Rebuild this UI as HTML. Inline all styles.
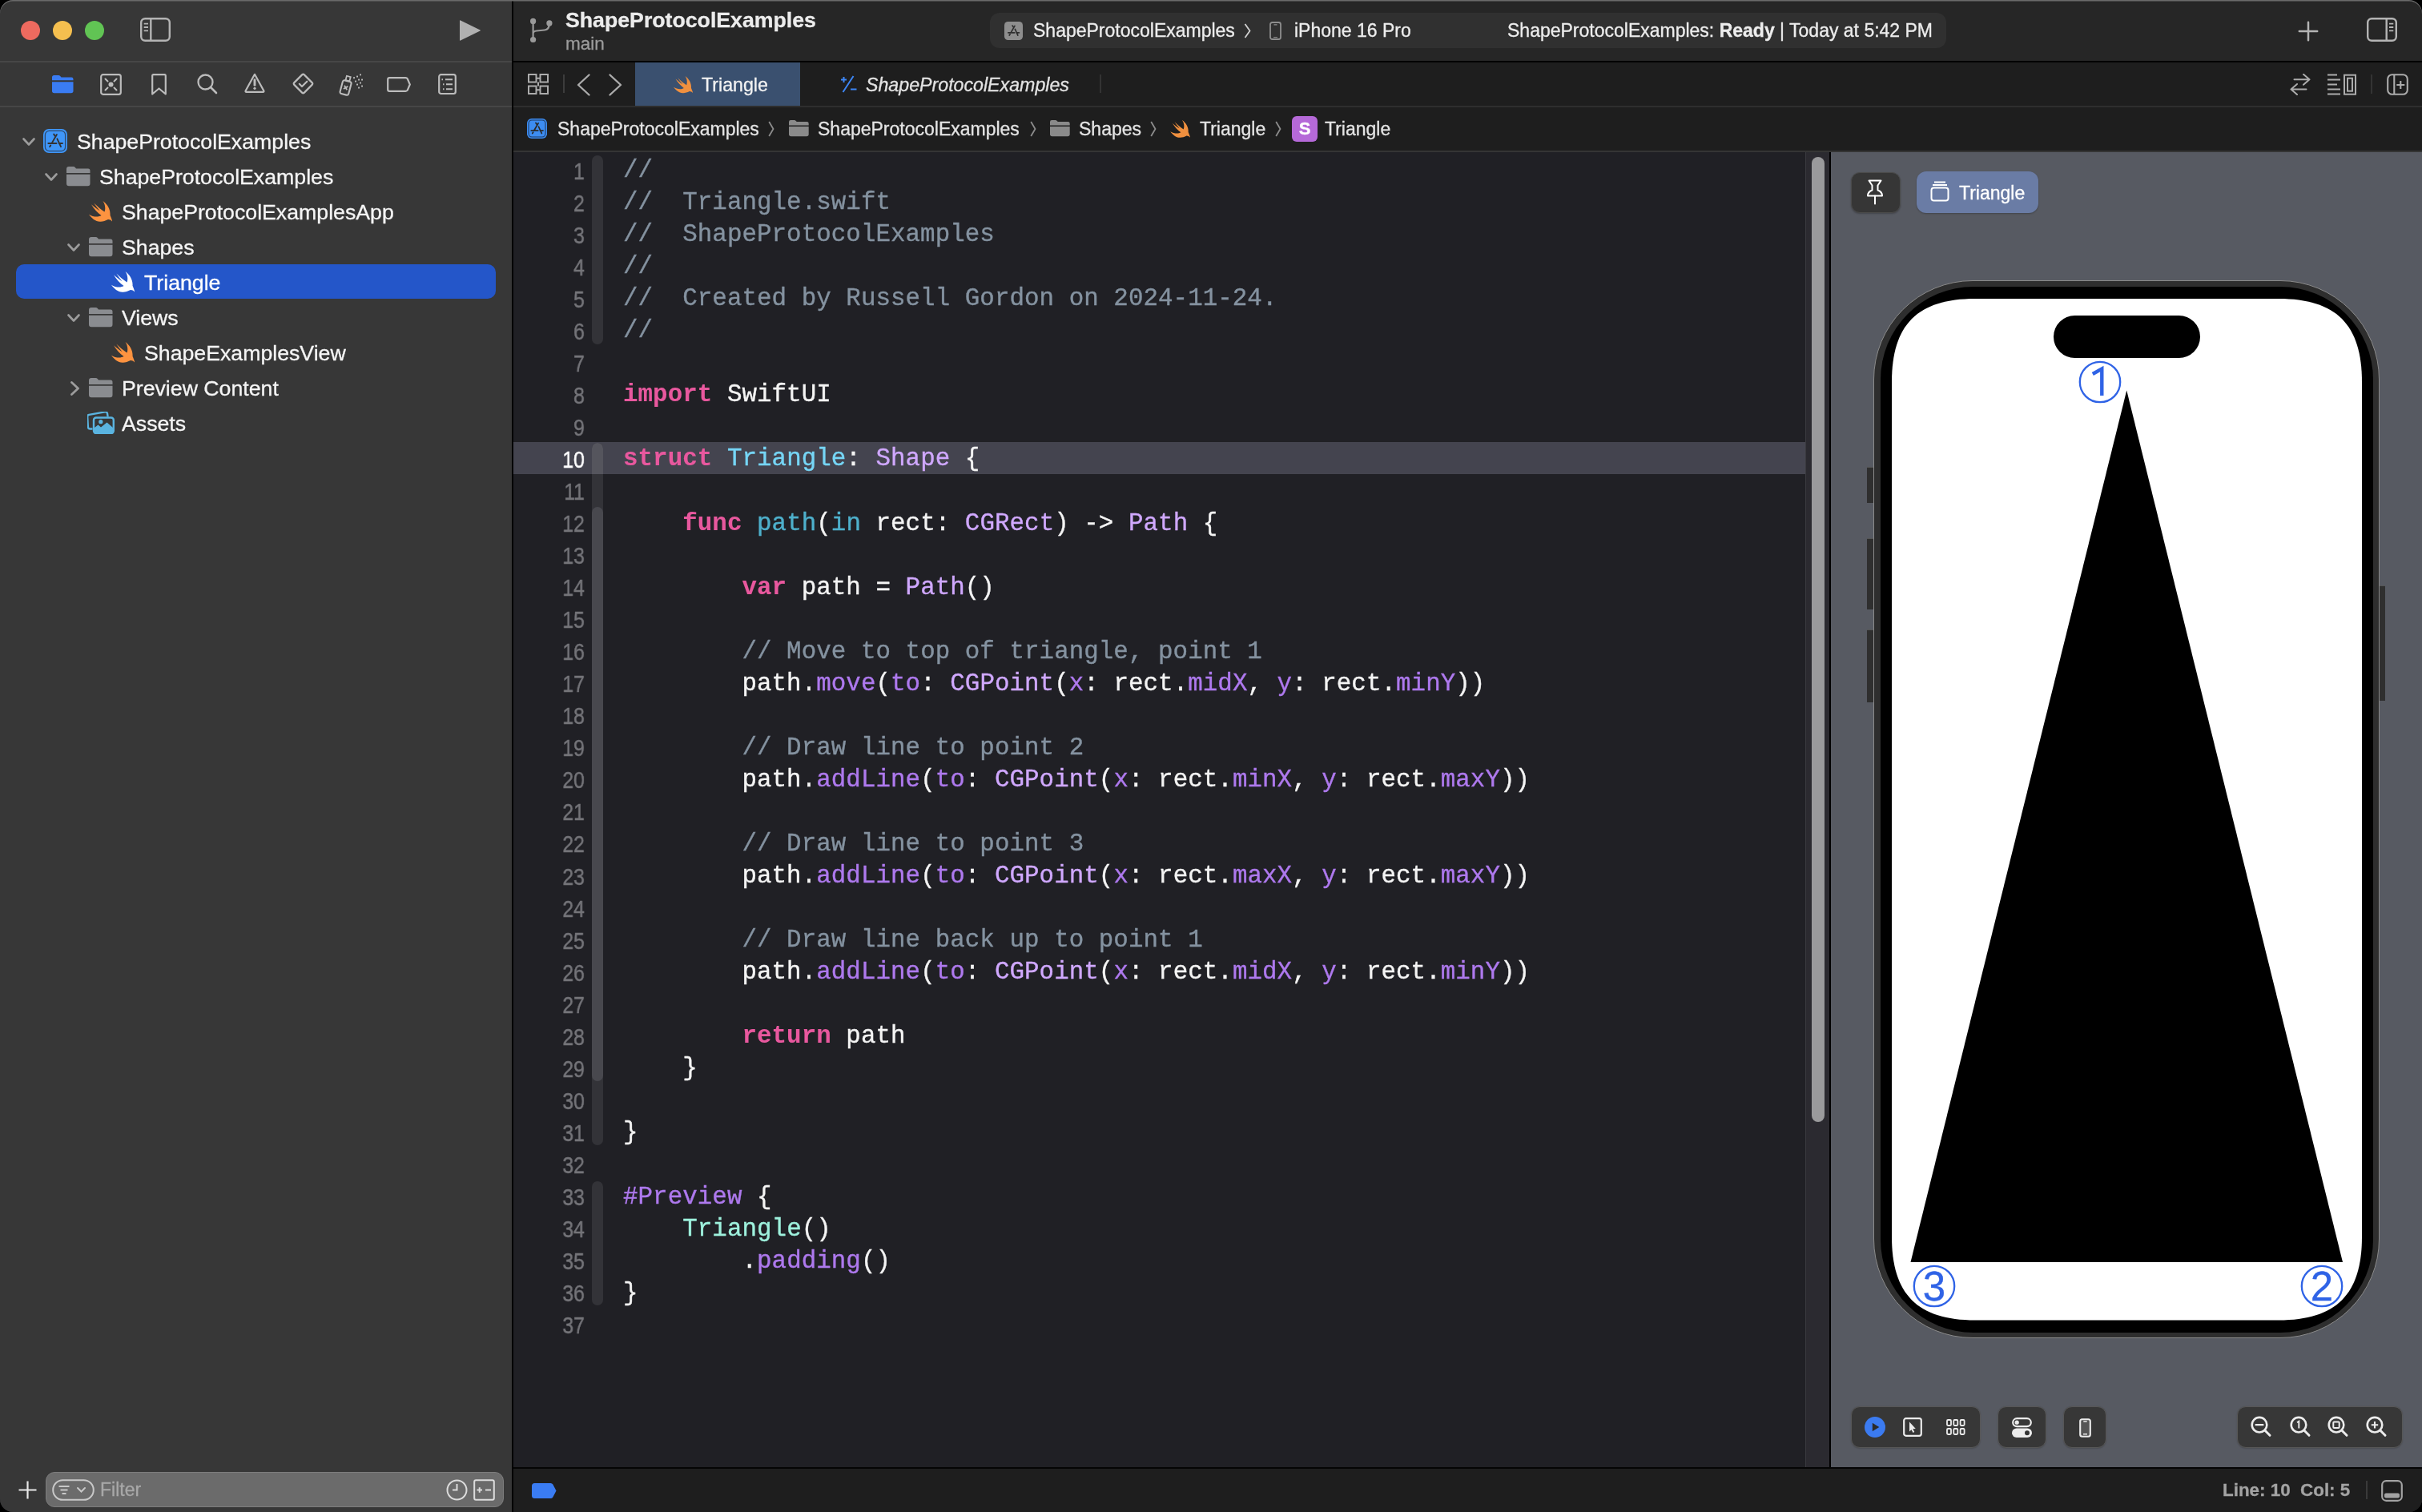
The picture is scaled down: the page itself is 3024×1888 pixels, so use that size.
<!DOCTYPE html>
<html><head><meta charset="utf-8">
<style>
*{margin:0;padding:0;box-sizing:border-box}
html,body{width:3024px;height:1888px;overflow:hidden;background:#000}
body{font-family:"Liberation Sans",sans-serif;color:#e6e6e6;position:relative}
.t,.code,.nums{will-change:transform}
.abs{position:absolute}
#win{position:absolute;left:0;top:0;width:3024px;height:1888px;border-radius:16px;overflow:hidden;background:#1f1f24}
/* sidebar */
#side{position:absolute;left:0;top:0;width:639px;height:1888px;background:#373737}
#vsep{position:absolute;left:639px;top:0;width:2px;height:1888px;background:#000}
.hl{position:absolute;height:2px;background:#464646}
.tl{position:absolute;width:24px;height:24px;border-radius:50%;top:26px}
/* toolbar */
#tb{position:absolute;left:641px;top:0;width:2383px;height:76px;background:#262626}
#tbline{position:absolute;left:641px;top:76px;width:2383px;height:2px;background:#030303}
#tabs{position:absolute;left:641px;top:78px;width:2383px;height:55px;background:#1e1e1e}
#crumb{position:absolute;left:641px;top:132px;width:2383px;height:58px;background:#1e1e1e;border-top:2px solid #2e2e2e;border-bottom:2px solid #353535}
#editor{position:absolute;left:641px;top:190px;width:1643px;height:1642px;background:#202025}
#canvas{position:absolute;left:2286px;top:190px;width:738px;height:1642px;background:#575a62}
#csep{position:absolute;left:2283.5px;top:190px;width:2.5px;height:1642px;background:#000}
#status{position:absolute;left:641px;top:1832px;width:2383px;height:56px;background:#1e1e1e;border-top:2px solid #050505}
.t{position:absolute;white-space:pre;line-height:1;-webkit-text-stroke:0.3px currentColor}
.tree{font-size:26.7px;color:#f2f2f2}
.code{position:absolute;left:777.5px;top:193.2px;font-family:"Liberation Mono",monospace;font-size:30.8px;line-height:40.05px;white-space:pre;color:#f4f4f4;letter-spacing:0.075px;-webkit-text-stroke:0.35px currentColor}
.code i{font-style:normal}
.code .c{color:#8492a0}
.code .k{color:#e8589e;font-weight:bold;-webkit-text-stroke:0.1px currentColor}
.code .d{color:#76d6f6}
.code .o{color:#4eb0cc}
.code .t{color:#d0a8ff;position:static;white-space:pre;line-height:inherit}
.code .f{color:#ae79ee}
.code .m{color:#ae79ee}
.code .j{color:#9ef1dd}
.nums{position:absolute;left:641px;top:192px;width:89px;text-align:right;font-size:29px;line-height:40.05px;color:#747479;transform:scaleX(0.86);transform-origin:89px 0;-webkit-text-stroke:0.45px #747479;padding-top:1.5px}
.nums b{display:block;font-weight:normal}
.nums b.cur{color:#ffffff;-webkit-text-stroke:0.45px #fff}
.ic{position:absolute}
</style></head><body>
<div id="win">
<!-- SIDEBAR -->
<div id="side">
  <div class="tl" style="left:26px;background:#ee6a5f"></div>
  <div class="tl" style="left:66px;background:#f5bf4f"></div>
  <div class="tl" style="left:106px;background:#61c454"></div>
  <!-- sidebar toggle -->
  <svg class="ic" style="left:175px;top:22px" width="38" height="30" viewBox="0 0 38 30"><rect x="1.2" y="1.2" width="35.6" height="27.6" rx="5" fill="none" stroke="#b4b4b4" stroke-width="2.4"/><line x1="13.3" y1="1.5" x2="13.3" y2="28.5" stroke="#b4b4b4" stroke-width="2.4"/><line x1="4.7" y1="7.7" x2="10" y2="7.7" stroke="#b4b4b4" stroke-width="1.8"/><line x1="4.7" y1="12" x2="10" y2="12" stroke="#b4b4b4" stroke-width="1.8"/><line x1="4.7" y1="16.3" x2="10" y2="16.3" stroke="#b4b4b4" stroke-width="1.8"/></svg>
  <!-- play -->
  <svg class="ic" style="left:572px;top:23px" width="30" height="30" viewBox="0 0 30 30"><path d="M3 2.5 Q2 1.8 2 3 L2 27 Q2 28.2 3 27.5 L27.5 15.6 Q28.5 15 27.5 14.4 Z" fill="#b0b0b0"/></svg>
  <div class="hl" style="left:0;top:76px;width:639px"></div>
  <div class="hl" style="left:0;top:132px;width:639px"></div>
  <!-- NAV ICONS -->
  <svg class="ic" style="left:64.7px;top:93.8px" width="27" height="23" viewBox="0 0 27 23"><path d="M0,2.6 Q0,0 2.6,0 L8,0 Q9.3,0 10.2,1 L11.5,2.4 L24.2,2.4 Q26.5,2.4 26.5,4.8 L26.5,6.3 L0,6.3 Z" fill="#3a7cf3"/><path d="M0,8.2 L26.5,8.2 L26.5,19.6 Q26.5,22.3 23.8,22.3 L2.7,22.3 Q0,22.3 0,19.6 Z" fill="#3a7cf3"/></svg>
<svg class="ic" style="left:124.5px;top:91.5px" width="27" height="27" viewBox="0 0 27 27"><rect x="1.2" y="1.2" width="24.6" height="24.6" rx="2.5" fill="none" stroke="#bcbcbc" stroke-width="2.2"/><circle cx="13.5" cy="13.5" r="3" fill="#bcbcbc"/><path d="M6.5,6.5 L9.5,9.5 M20.5,6.5 L17.5,9.5 M6.5,20.5 L9.5,17.5 M20.5,20.5 L17.5,17.5" stroke="#bcbcbc" stroke-width="2" stroke-linecap="round"/></svg>
<svg class="ic" style="left:188.5px;top:91.5px" width="19" height="27" viewBox="0 0 19 27"><path d="M1.2,2.5 Q1.2,1.2 2.5,1.2 L16.5,1.2 Q17.8,1.2 17.8,2.5 L17.8,25.5 L9.5,18.5 L1.2,25.5 Z" fill="none" stroke="#bcbcbc" stroke-width="2.2" stroke-linejoin="round"/></svg>
<svg class="ic" style="left:245.5px;top:92.0px" width="26" height="26" viewBox="0 0 26 26"><circle cx="10.5" cy="10.5" r="9" fill="none" stroke="#bcbcbc" stroke-width="2.3"/><path d="M17,17 L24,24" stroke="#bcbcbc" stroke-width="2.6" stroke-linecap="round"/></svg>
<svg class="ic" style="left:305.0px;top:91.2px" width="26" height="26" viewBox="0 0 26 26"><path d="M13,1.8 L24.3,22.2 Q25,23.8 23.3,23.8 L2.7,23.8 Q1,23.8 1.7,22.2 Z" fill="none" stroke="#bcbcbc" stroke-width="2.2" stroke-linejoin="round"/><path d="M13,8.8 L13,15.2" stroke="#bcbcbc" stroke-width="2.9" stroke-linecap="round"/><circle cx="13" cy="19.3" r="1.6" fill="#bcbcbc"/></svg>
<svg class="ic" style="left:364.5px;top:91.2px" width="27" height="27" viewBox="0 0 27 27"><path d="M12.1,2.4 Q13.5,1 14.9,2.4 L24.6,12.1 Q26,13.5 24.6,14.9 L14.9,24.6 Q13.5,26 12.1,24.6 L2.4,14.9 Q1,13.5 2.4,12.1 Z" fill="none" stroke="#bcbcbc" stroke-width="2.2" stroke-linejoin="round"/><path d="M8.8,13.8 L12,17 L18.3,10.7" fill="none" stroke="#bcbcbc" stroke-width="2.2" stroke-linecap="round" stroke-linejoin="round"/></svg>
<svg class="ic" style="left:423.0px;top:91.5px" width="31" height="28" viewBox="0 0 31 28"><g transform="rotate(15 9 17)"><rect x="3.2" y="9" width="11" height="17.2" rx="2.3" fill="none" stroke="#bcbcbc" stroke-width="2.1"/><rect x="6.2" y="3" width="5" height="5.5" fill="none" stroke="#bcbcbc" stroke-width="1.8"/><path d="M6.5,15.3 L11,19.8 M11,15.3 L6.5,19.8" stroke="#bcbcbc" stroke-width="1.8"/></g><rect x="26.1" y="0.4" width="1.9" height="1.9" fill="#bcbcbc"/><rect x="22.1" y="2.6" width="1.9" height="1.9" fill="#bcbcbc"/><rect x="18.1" y="4.2" width="1.9" height="1.9" fill="#bcbcbc"/><rect x="24.1" y="6.6" width="1.9" height="1.9" fill="#bcbcbc"/><rect x="28.1" y="6.6" width="1.9" height="1.9" fill="#bcbcbc"/><rect x="20.1" y="8.6" width="1.9" height="1.9" fill="#bcbcbc"/><rect x="26.1" y="10.6" width="1.9" height="1.9" fill="#bcbcbc"/><rect x="22.1" y="12.6" width="1.9" height="1.9" fill="#bcbcbc"/><rect x="28.1" y="14.6" width="1.9" height="1.9" fill="#bcbcbc"/><rect x="24.1" y="16.6" width="1.9" height="1.9" fill="#bcbcbc"/></svg>
<svg class="ic" style="left:482.5px;top:95.5px" width="30" height="19" viewBox="0 0 30 19"><path d="M3.3,1.2 L23.5,1.2 Q25,1.2 25.8,2.5 L28.8,9.5 L25.8,16.5 Q25,17.8 23.5,17.8 L3.3,17.8 Q1.2,17.8 1.2,15.7 L1.2,3.3 Q1.2,1.2 3.3,1.2 Z" fill="none" stroke="#bcbcbc" stroke-width="2.2"/></svg>
<svg class="ic" style="left:546.5px;top:91.5px" width="23" height="27" viewBox="0 0 23 27"><rect x="1.2" y="1.2" width="20.6" height="23.8" rx="2.5" fill="none" stroke="#bcbcbc" stroke-width="2.2"/><path d="M4.5,7.3 L6,7.3 M9,7.3 L18,7.3 M6,13.3 L7.5,13.3 M10,13.3 L18,13.3 M6,19.3 L7.5,19.3 M10,19.3 L18,19.3" stroke="#bcbcbc" stroke-width="2"/></svg>
  <!-- TREE -->
  <div class="abs" style="left:20px;top:330px;width:599px;height:43px;border-radius:10px;background:#2456c9"></div>
<svg class="ic" style="left:28.0px;top:171.8px" width="16" height="11" viewBox="0 0 16 11"><path d="M1.5,1.5 L8,8.5 L14.5,1.5" fill="none" stroke="#9c9c9c" stroke-width="2.6" stroke-linecap="round" stroke-linejoin="round"/></svg>
<svg class="ic" style="left:54.0px;top:161.0px" width="30" height="30" viewBox="0 0 30 30"><rect x="0" y="0" width="30" height="30" rx="7" fill="#3f96f8"/><rect x="2.4" y="2.4" width="25.2" height="25.2" rx="5" fill="none" stroke="#2d4a6e" stroke-width="1.3"/><path d="M16.9,7 L10.9,17.4 M13.2,6.6 L14.4,8.4 M17.4,12.3 L22,22.2 M6.3,18 L16.5,18 M19.6,18 L24,18 M9.2,20.6 L8.1,22.2" stroke="#333" stroke-width="1.9" stroke-linecap="round" fill="none"/></svg>
<div class="t tree" style="left:96px;top:163.5px;color:#f5f5f5">ShapeProtocolExamples</div>
<svg class="ic" style="left:56.0px;top:215.8px" width="16" height="11" viewBox="0 0 16 11"><path d="M1.5,1.5 L8,8.5 L14.5,1.5" fill="none" stroke="#9c9c9c" stroke-width="2.6" stroke-linecap="round" stroke-linejoin="round"/></svg>
<svg class="ic" style="left:82.7px;top:208.0px" width="30" height="25" viewBox="0 0 30 25"><path d="M0,3 Q0,0 3,0 L8.5,0 Q10,0 11,1.2 L12,2.6 L27,2.6 Q29.5,2.6 29.5,5.2 L29.5,7.9 L0,7.9 Z" fill="#8a8c90"/><path d="M0,9.8 L29.5,9.8 L29.5,21 Q29.5,24.2 26.5,24.2 L3,24.2 Q0,24.2 0,21 Z" fill="#8a8c90"/></svg>
<div class="t tree" style="left:124px;top:207.5px;color:#f5f5f5">ShapeProtocolExamples</div>
<svg class="ic" style="left:111.0px;top:251.0px" width="29" height="26" viewBox="0 0 29 26"><path d="M17.5,0 C23,4 27.2,10.5 26.5,17.8 C27.6,20.4 28.8,23.4 29.2,25.6 C27.6,23.9 25.6,23 24,23.1 C20.6,24.9 17,25.9 13.9,25.7 C8,25.4 3.4,21.4 0,16.7 C5,19.8 11.5,20.6 15.5,18.1 C10.8,14.8 6.2,9.6 3,4.3 C6.5,7.4 10,10.2 13.5,12.2 C11,9.2 8.5,6 6.3,2.6 C10.5,6.5 15,10.8 19.5,13.5 C21,9.5 20.4,4.2 17.5,0 Z" fill="#fd9340"/><!--#373737--></svg>
<div class="t tree" style="left:152px;top:251.5px;color:#f5f5f5">ShapeProtocolExamplesApp</div>
<svg class="ic" style="left:84.0px;top:303.8px" width="16" height="11" viewBox="0 0 16 11"><path d="M1.5,1.5 L8,8.5 L14.5,1.5" fill="none" stroke="#9c9c9c" stroke-width="2.6" stroke-linecap="round" stroke-linejoin="round"/></svg>
<svg class="ic" style="left:111.0px;top:296.0px" width="30" height="25" viewBox="0 0 30 25"><path d="M0,3 Q0,0 3,0 L8.5,0 Q10,0 11,1.2 L12,2.6 L27,2.6 Q29.5,2.6 29.5,5.2 L29.5,7.9 L0,7.9 Z" fill="#8a8c90"/><path d="M0,9.8 L29.5,9.8 L29.5,21 Q29.5,24.2 26.5,24.2 L3,24.2 Q0,24.2 0,21 Z" fill="#8a8c90"/></svg>
<div class="t tree" style="left:152px;top:295.5px;color:#f5f5f5">Shapes</div>
<svg class="ic" style="left:139.0px;top:339.0px" width="29" height="26" viewBox="0 0 29 26"><path d="M17.5,0 C23,4 27.2,10.5 26.5,17.8 C27.6,20.4 28.8,23.4 29.2,25.6 C27.6,23.9 25.6,23 24,23.1 C20.6,24.9 17,25.9 13.9,25.7 C8,25.4 3.4,21.4 0,16.7 C5,19.8 11.5,20.6 15.5,18.1 C10.8,14.8 6.2,9.6 3,4.3 C6.5,7.4 10,10.2 13.5,12.2 C11,9.2 8.5,6 6.3,2.6 C10.5,6.5 15,10.8 19.5,13.5 C21,9.5 20.4,4.2 17.5,0 Z" fill="#ffffff"/><!--#2456c9--></svg>
<div class="t tree" style="left:180px;top:339.5px;color:#ffffff">Triangle</div>
<svg class="ic" style="left:84.0px;top:391.8px" width="16" height="11" viewBox="0 0 16 11"><path d="M1.5,1.5 L8,8.5 L14.5,1.5" fill="none" stroke="#9c9c9c" stroke-width="2.6" stroke-linecap="round" stroke-linejoin="round"/></svg>
<svg class="ic" style="left:111.0px;top:384.0px" width="30" height="25" viewBox="0 0 30 25"><path d="M0,3 Q0,0 3,0 L8.5,0 Q10,0 11,1.2 L12,2.6 L27,2.6 Q29.5,2.6 29.5,5.2 L29.5,7.9 L0,7.9 Z" fill="#8a8c90"/><path d="M0,9.8 L29.5,9.8 L29.5,21 Q29.5,24.2 26.5,24.2 L3,24.2 Q0,24.2 0,21 Z" fill="#8a8c90"/></svg>
<div class="t tree" style="left:152px;top:383.5px;color:#f5f5f5">Views</div>
<svg class="ic" style="left:139.0px;top:427.0px" width="29" height="26" viewBox="0 0 29 26"><path d="M17.5,0 C23,4 27.2,10.5 26.5,17.8 C27.6,20.4 28.8,23.4 29.2,25.6 C27.6,23.9 25.6,23 24,23.1 C20.6,24.9 17,25.9 13.9,25.7 C8,25.4 3.4,21.4 0,16.7 C5,19.8 11.5,20.6 15.5,18.1 C10.8,14.8 6.2,9.6 3,4.3 C6.5,7.4 10,10.2 13.5,12.2 C11,9.2 8.5,6 6.3,2.6 C10.5,6.5 15,10.8 19.5,13.5 C21,9.5 20.4,4.2 17.5,0 Z" fill="#fd9340"/><!--#373737--></svg>
<div class="t tree" style="left:180px;top:427.5px;color:#f5f5f5">ShapeExamplesView</div>
<svg class="ic" style="left:88.0px;top:476.0px" width="12" height="18" viewBox="0 0 12 18"><path d="M1.5,1.5 L9.5,9 L1.5,16.5" fill="none" stroke="#9c9c9c" stroke-width="2.8" stroke-linecap="round" stroke-linejoin="round"/></svg>
<svg class="ic" style="left:111.0px;top:472.0px" width="30" height="25" viewBox="0 0 30 25"><path d="M0,3 Q0,0 3,0 L8.5,0 Q10,0 11,1.2 L12,2.6 L27,2.6 Q29.5,2.6 29.5,5.2 L29.5,7.9 L0,7.9 Z" fill="#8a8c90"/><path d="M0,9.8 L29.5,9.8 L29.5,21 Q29.5,24.2 26.5,24.2 L3,24.2 Q0,24.2 0,21 Z" fill="#8a8c90"/></svg>
<div class="t tree" style="left:152px;top:471.5px;color:#f5f5f5">Preview Content</div>
<svg class="ic" style="left:109.0px;top:514.0px" width="34" height="28" viewBox="0 0 34 28"><path d="M6.5,21.5 L3.2,21.5 Q1.2,21.5 0.9,19.5 L0.2,6.5 Q0,4.3 2.2,3.9 L22,0.4 Q24.2,0 25,2.2 L25.6,6.4" fill="none" stroke="#5ab4e0" stroke-width="2.4"/><rect x="8" y="7.5" width="24.8" height="19.5" rx="3" fill="none" stroke="#5ab4e0" stroke-width="2.4"/><path d="M9,26 L9,20 L13.5,16.5 L17,19.5 L24.5,13.5 L32,20 L32,26 Z" fill="#5ab4e0"/><circle cx="16.8" cy="12.7" r="2.6" fill="#5ab4e0"/></svg>
<div class="t tree" style="left:152px;top:515.5px;color:#f5f5f5">Assets</div>
  <!-- filter -->
  <svg class="ic" style="left:22.0px;top:1848.0px" width="25" height="25" viewBox="0 0 25 25"><path d="M12.5,1.5 L12.5,23.5 M1.5,12.5 L23.5,12.5" stroke="#e8e8e8" stroke-width="2.2"/></svg>
<div class="abs" style="left:56.5px;top:1838px;width:572px;height:43.5px;border-radius:11px;background:#6b6b6b;border:1.5px solid #7d7d7d"></div>
<svg class="ic" style="left:64.5px;top:1847.0px" width="53" height="27" viewBox="0 0 53 27"><rect x="1.2" y="1.2" width="50.6" height="24.6" rx="12.3" fill="none" stroke="#c8c8c8" stroke-width="2"/><path d="M8.5,9 L21.5,9 M10.5,13.5 L19.5,13.5 M12.5,18 L17.5,18" stroke="#c8c8c8" stroke-width="1.9"/><path d="M32,11 L36.5,15.5 L41,11" fill="none" stroke="#c8c8c8" stroke-width="2" stroke-linecap="round"/></svg>
<div class="t" style="left:124.5px;top:1848.5px;font-size:23px;color:#a8a8a8">Filter</div>
<svg class="ic" style="left:556.5px;top:1846.5px" width="27" height="27" viewBox="0 0 27 27"><circle cx="13.5" cy="13.5" r="12" fill="none" stroke="#dcdcdc" stroke-width="2"/><path d="M13.5,6 L13.5,13.5 L8,13.5" fill="none" stroke="#dcdcdc" stroke-width="2"/></svg>
<svg class="ic" style="left:590.5px;top:1846.5px" width="27" height="27" viewBox="0 0 27 27"><rect x="1.2" y="1.2" width="24.6" height="24.6" rx="2" fill="none" stroke="#dcdcdc" stroke-width="2"/><path d="M4.5,13.5 L11,13.5 M7.75,10.2 L7.75,16.8 M15,13.5 L22,13.5" stroke="#dcdcdc" stroke-width="2"/></svg>
</div>
<div id="vsep"></div>
<!-- TOOLBAR -->
<div id="tb"><svg class="ic" style="left:19.0px;top:21.0px" width="30" height="34" viewBox="0 0 30 34"><circle cx="5.6" cy="5.4" r="3.6" fill="#9a9a9a"/><circle cx="25.9" cy="7.9" r="3.6" fill="#9a9a9a"/><circle cx="5.6" cy="28.5" r="3.6" fill="#9a9a9a"/><path d="M5.6,5.4 L5.6,28.5 M5.6,21 Q5.6,18 10,17.5 L20,16.5 Q25.9,16 25.9,8" fill="none" stroke="#9a9a9a" stroke-width="2.2"/></svg>
<div class="t" style="left:65.0px;top:12.0px;font-size:26.7px;color:#ececec;font-weight:bold;font-style:normal;">ShapeProtocolExamples</div>
<div class="t" style="left:65.0px;top:43.5px;font-size:22.5px;color:#9c9c9c;font-weight:normal;font-style:normal;">main</div>
<div class="abs" style="left:595px;top:16px;width:1194px;height:44px;border-radius:12px;background:#303030"></div>
<svg class="ic" style="left:613.0px;top:26.5px" width="23" height="23" viewBox="0 0 30 30"><rect width="30" height="30" rx="6" fill="#8e8e8e"/><path d="M16.9,7 L10.9,17.4 M13.2,6.6 L14.4,8.4 M17.4,12.3 L22,22.2 M6.3,18 L16.5,18 M19.6,18 L24,18 M9.2,20.6 L8.1,22.2" stroke="#2e2e2e" stroke-width="2.2" stroke-linecap="round" fill="none"/></svg>
<div class="t" style="left:649.0px;top:26.5px;font-size:23.0px;color:#ededed;font-weight:normal;font-style:normal;">ShapeProtocolExamples</div>
<svg class="ic" style="left:912.0px;top:29.0px" width="9" height="19" viewBox="0 0 9 19"><path d="M1.5,1 L7.5,9.5 L1.5,18" fill="none" stroke="#d0d0d0" stroke-width="1.8"/></svg>
<svg class="ic" style="left:944.0px;top:26.5px" width="15" height="23" viewBox="0 0 15 23"><rect x="1" y="1" width="13" height="21" rx="2.5" fill="none" stroke="#8e8e8e" stroke-width="1.8"/><path d="M5.5,3.8 L9.5,3.8 M5,19.5 L10,19.5" stroke="#8e8e8e" stroke-width="1.2"/></svg>
<div class="t" style="left:975.0px;top:26.5px;font-size:23.0px;color:#ededed;font-weight:normal;font-style:normal;">iPhone 16 Pro</div>
<div class="t" style="left:1241.0px;top:26.5px;font-size:23.0px;color:#ededed;font-weight:normal;font-style:normal;">ShapeProtocolExamples: <b>Ready</b> | Today at 5:42 PM</div>
<svg class="ic" style="left:2228.0px;top:26.0px" width="26" height="26" viewBox="0 0 26 26"><path d="M13,1.8 L13,24.2 M1.8,13 L24.2,13" stroke="#b4b4b4" stroke-width="2.5" stroke-linecap="round"/></svg>
<svg class="ic" style="left:2313.8px;top:22.0px" width="38" height="30" viewBox="0 0 38 30"><rect x="1.2" y="1.2" width="35.6" height="27.6" rx="5" fill="none" stroke="#b4b4b4" stroke-width="2.4"/><line x1="24.7" y1="1.5" x2="24.7" y2="28.5" stroke="#b4b4b4" stroke-width="2.4"/><path d="M28,7.7 L33.3,7.7 M28,12 L33.3,12 M28,16.3 L33.3,16.3" stroke="#b4b4b4" stroke-width="1.8"/></svg></div>
<div id="tbline"></div>
<div id="tabs"><div class="abs" style="left:152px;top:0px;width:206px;height:54px;background:#3a506f"></div>
<svg class="ic" style="left:18.0px;top:14.0px" width="26" height="26" viewBox="0 0 26 26"><g fill="none" stroke="#acacac" stroke-width="2"><rect x="1" y="1" width="9.5" height="9.5"/><rect x="15.5" y="1" width="9.5" height="9.5"/><rect x="1" y="15.5" width="9.5" height="9.5"/><rect x="15.5" y="15.5" width="9.5" height="9.5"/><path d="M10.5,5.7 L15.5,5.7 M10.5,20.3 L15.5,20.3 M13,10.5 L13,15.5"/></g></svg>
<div class="abs" style="left:62px;top:15px;width:2px;height:23px;background:#3c3c3c"></div>
<svg class="ic" style="left:79.0px;top:13.5px" width="17" height="28" viewBox="0 0 17 28"><path d="M15.5,1.5 L2,14 L15.5,26.5" fill="none" stroke="#acacac" stroke-width="2.3" stroke-linecap="round" stroke-linejoin="round"/></svg>
<svg class="ic" style="left:119.0px;top:13.5px" width="17" height="28" viewBox="0 0 17 28"><path d="M1.5,1.5 L15,14 L1.5,26.5" fill="none" stroke="#acacac" stroke-width="2.3" stroke-linecap="round" stroke-linejoin="round"/></svg>
<svg class="ic" style="left:200.0px;top:17.0px" width="24" height="21.5" viewBox="0 0 29 26"><path d="M17.5,0 C23,4 27.2,10.5 26.5,17.8 C27.6,20.4 28.8,23.4 29.2,25.6 C27.6,23.9 25.6,23 24,23.1 C20.6,24.9 17,25.9 13.9,25.7 C8,25.4 3.4,21.4 0,16.7 C5,19.8 11.5,20.6 15.5,18.1 C10.8,14.8 6.2,9.6 3,4.3 C6.5,7.4 10,10.2 13.5,12.2 C11,9.2 8.5,6 6.3,2.6 C10.5,6.5 15,10.8 19.5,13.5 C21,9.5 20.4,4.2 17.5,0 Z" fill="#f0903f"/><!--#3a506f--></svg>
<div class="t" style="left:235.0px;top:17.0px;font-size:23.2px;color:#f2f2f2;font-weight:normal;font-style:normal;">Triangle</div>
<svg class="ic" style="left:408.0px;top:16.0px" width="22" height="22" viewBox="0 0 22 22"><path d="M1,5.5 L8,5.5 M4.5,2 L4.5,9 M16.5,1 L3.5,21 M13,17.5 L20.5,17.5" stroke="#3d86f5" stroke-width="2" fill="none"/></svg>
<div class="t" style="left:440.0px;top:17.0px;font-size:23.2px;color:#e2e2e2;font-weight:normal;font-style:italic;">ShapeProtocolExamples</div>
<div class="abs" style="left:732px;top:15px;width:2px;height:23px;background:#333"></div>
<svg class="ic" style="left:2218.0px;top:13.5px" width="26" height="27" viewBox="0 0 26 27"><g fill="none" stroke="#acacac" stroke-width="2" stroke-linecap="round" stroke-linejoin="round"><path d="M5.5,7.3 L24.5,7.3 M17,0.8 L24.5,7.3 L17,13.8"/><path d="M1.5,19.5 L20.5,19.5 M9,13 L1.5,19.5 L9,26"/></g></svg>
<svg class="ic" style="left:2264.0px;top:13.5px" width="38" height="27" viewBox="0 0 38 27"><g fill="none" stroke="#acacac" stroke-width="2"><path d="M1,1.5 L13,1.5 M1,7.5 L17,7.5 M1,13.5 L13,13.5 M1,19.5 L17,19.5 M1,25.5 L17,25.5"/><rect x="22" y="1.7" width="14" height="24" /><rect x="26" y="5.7" width="6" height="16"/></g></svg>
<div class="abs" style="left:2319px;top:15px;width:2px;height:24px;background:#333"></div>
<svg class="ic" style="left:2338.5px;top:13.5px" width="27" height="27" viewBox="0 0 27 27"><g fill="none" stroke="#acacac" stroke-width="2.1"><rect x="1.2" y="1.2" width="24.6" height="24.6" rx="5.5"/><path d="M9.3,1.5 L9.3,25.5 M17.3,9 L17.3,19 M12.3,14 L22.3,14"/></g></svg></div>
<div id="crumb"><svg class="ic" style="left:17.0px;top:14.0px" width="25" height="25" viewBox="0 0 30 30"><rect width="30" height="30" rx="7" fill="#3d8df2"/><rect x="2.4" y="2.4" width="25.2" height="25.2" rx="5" fill="none" stroke="#1e3c66" stroke-width="1.3"/><path d="M16.9,7 L10.9,17.4 M13.2,6.6 L14.4,8.4 M17.4,12.3 L22,22.2 M6.3,18 L16.5,18 M19.6,18 L24,18 M9.2,20.6 L8.1,22.2" stroke="#2a2a2a" stroke-width="2.1" stroke-linecap="round" fill="none"/></svg>
<div class="t" style="left:55.0px;top:16.0px;font-size:23px;color:#e4e4e4">ShapeProtocolExamples</div>
<svg class="ic" style="left:318.0px;top:17.0px" width="8" height="20" viewBox="0 0 8 20"><path d="M1.2,1 L6.5,10 L1.2,19" fill="none" stroke="#8c8c8c" stroke-width="1.8"/></svg>
<svg class="ic" style="left:344.0px;top:16.0px" width="25" height="21" viewBox="0 0 25 21"><path d="M0,2.3 Q0,0 2.3,0 L6.8,0 Q8,0 8.7,0.9 L9.8,2.1 L22.6,2.1 Q24.7,2.1 24.7,4.2 L24.7,6.4 L0,6.4 Z" fill="#8a8a8a"/><path d="M0,8 L24.7,8 L24.7,17.6 Q24.7,20.3 22,20.3 L2.7,20.3 Q0,20.3 0,17.6 Z" fill="#8a8a8a"/></svg>
<div class="t" style="left:380.0px;top:16.0px;font-size:23px;color:#e4e4e4">ShapeProtocolExamples</div>
<svg class="ic" style="left:645.0px;top:17.0px" width="8" height="20" viewBox="0 0 8 20"><path d="M1.2,1 L6.5,10 L1.2,19" fill="none" stroke="#8c8c8c" stroke-width="1.8"/></svg>
<svg class="ic" style="left:670.0px;top:16.0px" width="25" height="21" viewBox="0 0 25 21"><path d="M0,2.3 Q0,0 2.3,0 L6.8,0 Q8,0 8.7,0.9 L9.8,2.1 L22.6,2.1 Q24.7,2.1 24.7,4.2 L24.7,6.4 L0,6.4 Z" fill="#8a8a8a"/><path d="M0,8 L24.7,8 L24.7,17.6 Q24.7,20.3 22,20.3 L2.7,20.3 Q0,20.3 0,17.6 Z" fill="#8a8a8a"/></svg>
<div class="t" style="left:706.0px;top:16.0px;font-size:23px;color:#e4e4e4">Shapes</div>
<svg class="ic" style="left:795.0px;top:17.0px" width="8" height="20" viewBox="0 0 8 20"><path d="M1.2,1 L6.5,10 L1.2,19" fill="none" stroke="#8c8c8c" stroke-width="1.8"/></svg>
<svg class="ic" style="left:820.0px;top:16.0px" width="25" height="22" viewBox="0 0 29 26"><path d="M17.5,0 C23,4 27.2,10.5 26.5,17.8 C27.6,20.4 28.8,23.4 29.2,25.6 C27.6,23.9 25.6,23 24,23.1 C20.6,24.9 17,25.9 13.9,25.7 C8,25.4 3.4,21.4 0,16.7 C5,19.8 11.5,20.6 15.5,18.1 C10.8,14.8 6.2,9.6 3,4.3 C6.5,7.4 10,10.2 13.5,12.2 C11,9.2 8.5,6 6.3,2.6 C10.5,6.5 15,10.8 19.5,13.5 C21,9.5 20.4,4.2 17.5,0 Z" fill="#f0903f"/><!--#1e1e1e--></svg>
<div class="t" style="left:857.0px;top:16.0px;font-size:23px;color:#e4e4e4">Triangle</div>
<svg class="ic" style="left:951.0px;top:17.0px" width="8" height="20" viewBox="0 0 8 20"><path d="M1.2,1 L6.5,10 L1.2,19" fill="none" stroke="#8c8c8c" stroke-width="1.8"/></svg>
<div class="abs" style="left:972px;top:11px;width:32px;height:32px;border-radius:6px;background:#b569d8"></div>
<div class="t" style="left:972px;top:16px;width:32px;text-align:center;font-size:22px;font-weight:bold;color:#fff">S</div>
<div class="t" style="left:1013.0px;top:16.0px;font-size:23px;color:#e4e4e4">Triangle</div></div>
<div id="editor"></div>
<div class="abs" style="left:641px;top:552px;width:1613px;height:40px;background:#44444f"></div>
<div class="abs" style="left:739px;top:194.0px;width:14px;height:236.0px;background:#333338;border-radius:7px 7px 7px 7px"></div>
<div class="abs" style="left:739px;top:553.0px;width:14px;height:877.0px;background:#333338;border-radius:7px 7px 7px 7px"></div>
<div class="abs" style="left:739px;top:633.0px;width:14px;height:717.0px;background:#48484e;border-radius:7px 7px 7px 7px"></div>
<div class="abs" style="left:739px;top:553px;width:14px;height:39px;background:#55555d;border-radius:7px 7px 0 0"></div>
<div class="abs" style="left:739px;top:1475.0px;width:14px;height:155.0px;background:#333338;border-radius:7px 7px 7px 7px"></div>
<div class="abs" style="left:2254px;top:190px;width:29.5px;height:1642px;background:#2b2a30;border-left:1.5px solid #3a3a3f"></div>
<div class="abs" style="left:2262px;top:196px;width:16px;height:1205px;border-radius:8px;background:#9a9a9c"></div>
<div class="nums"><b>1</b>
<b>2</b>
<b>3</b>
<b>4</b>
<b>5</b>
<b>6</b>
<b>7</b>
<b>8</b>
<b>9</b>
<b class="cur">10</b>
<b>11</b>
<b>12</b>
<b>13</b>
<b>14</b>
<b>15</b>
<b>16</b>
<b>17</b>
<b>18</b>
<b>19</b>
<b>20</b>
<b>21</b>
<b>22</b>
<b>23</b>
<b>24</b>
<b>25</b>
<b>26</b>
<b>27</b>
<b>28</b>
<b>29</b>
<b>30</b>
<b>31</b>
<b>32</b>
<b>33</b>
<b>34</b>
<b>35</b>
<b>36</b>
<b>37</b></div>
<div class="code"><i class="c">//</i>
<i class="c">//  Triangle.swift</i>
<i class="c">//  ShapeProtocolExamples</i>
<i class="c">//</i>
<i class="c">//  Created by Russell Gordon on 2024-11-24.</i>
<i class="c">//</i>

<i class="k">import</i> SwiftUI

<i class="k">struct</i> <i class="d">Triangle</i>: <i class="t">Shape</i> {

    <i class="k">func</i> <i class="o">path</i>(<i class="o">in</i> rect: <i class="t">CGRect</i>) -&gt; <i class="t">Path</i> {

        <i class="k">var</i> path = <i class="t">Path</i>()

        <i class="c">// Move to top of triangle, point 1</i>
        path.<i class="f">move</i>(<i class="f">to</i>: <i class="t">CGPoint</i>(<i class="f">x</i>: rect.<i class="f">midX</i>, <i class="f">y</i>: rect.<i class="f">minY</i>))

        <i class="c">// Draw line to point 2</i>
        path.<i class="f">addLine</i>(<i class="f">to</i>: <i class="t">CGPoint</i>(<i class="f">x</i>: rect.<i class="f">minX</i>, <i class="f">y</i>: rect.<i class="f">maxY</i>))

        <i class="c">// Draw line to point 3</i>
        path.<i class="f">addLine</i>(<i class="f">to</i>: <i class="t">CGPoint</i>(<i class="f">x</i>: rect.<i class="f">maxX</i>, <i class="f">y</i>: rect.<i class="f">maxY</i>))

        <i class="c">// Draw line back up to point 1</i>
        path.<i class="f">addLine</i>(<i class="f">to</i>: <i class="t">CGPoint</i>(<i class="f">x</i>: rect.<i class="f">midX</i>, <i class="f">y</i>: rect.<i class="f">minY</i>))

        <i class="k">return</i> path
    }

}

<i class="m">#Preview</i> {
    <i class="j">Triangle</i>()
        .<i class="f">padding</i>()
}
</div>
<div id="csep"></div>
<div id="canvas"><div class="abs" style="left:24.5px;top:24.5px;width:62.0px;height:51.0px;border-radius:11px;background:#363636;border:1.5px solid #4b4b4b;box-shadow:0 1px 2px rgba(0,0,0,.25)"></div>
<svg class="ic" style="left:44.0px;top:34.0px" width="22" height="32" viewBox="0 0 22 32"><g fill="none" stroke="#fff" stroke-width="2" stroke-linejoin="round"><path d="M3.5,1.5 L18.5,1.5 L14.5,7.5 L14.5,13.5 Q20,15.5 20,20.5 L2,20.5 Q2,15.5 7.5,13.5 L7.5,7.5 Z"/><path d="M11,20.5 L11,30.5" stroke-linecap="round"/></g></svg>
<div class="abs" style="left:107.0px;top:24.0px;width:152.0px;height:52.0px;border-radius:12px;background:#6a7ca5;box-shadow:0 1px 2px rgba(0,0,0,.25)"></div>
<svg class="ic" style="left:124.0px;top:36.0px" width="24" height="26" viewBox="0 0 24 26"><g fill="none" stroke="#fff" stroke-width="2"><rect x="1.5" y="8.5" width="21" height="16" rx="3"/><path d="M3,5 L21,5 M5,1.5 L19,1.5"/></g></svg>
<div class="t" style="left:160.0px;top:39.5px;font-size:23px;color:#fff">Triangle</div>
<div class="abs" style="left:45.0px;top:393.0px;width:9.0px;height:45.0px;background:#2f2f2f;border-top:1px solid #555"></div>
<div class="abs" style="left:45.0px;top:482.0px;width:9.0px;height:89.0px;background:#2f2f2f;border-top:1px solid #555"></div>
<div class="abs" style="left:45.0px;top:596.0px;width:9.0px;height:91.0px;background:#2f2f2f;border-top:1px solid #555"></div>
<div class="abs" style="left:684.0px;top:541.0px;width:8.0px;height:144.0px;background:#2f2f2f;border-top:1px solid #555"></div>
<div class="abs" style="left:53.0px;top:160.0px;width:632.0px;height:1321.0px;border-radius:124px;background:#2e2e2e;border:1.6px solid #8a8a8a"></div>
<div class="abs" style="left:61.5px;top:167.5px;width:615.0px;height:1306.0px;border-radius:116px;background:#000"></div>
<svg class="ic" style="left:76.0px;top:183.0px" width="587" height="1275.5" viewBox="0 0 587 1275.5"><path d="M104.00,0 L483.00,0 C554.76,0 587.00,32.24 587.00,104.00 L587.00,1171.50 C587.00,1243.26 554.76,1275.50 483.00,1275.50 L104.00,1275.50 C32.24,1275.50 0,1243.26 0,1171.50 L0,104.00 C0,32.24 32.24,0 104.00,0 Z" fill="#fff"/></svg>
<div class="abs" style="left:278.0px;top:204.0px;width:183.0px;height:53.0px;border-radius:27px;background:#000"></div>
<svg class="ic" style="left:76.0px;top:183.0px" width="587" height="1276" viewBox="0 0 587 1276"><path d="M293.25,114.5 L563,1203 L23.5,1203 Z" fill="#000"/></svg>
<svg class="ic" style="left:308.7px;top:259.5px" width="54" height="54" viewBox="0 0 54 54"><circle cx="27" cy="27" r="25.2" fill="none" stroke="#2f63e6" stroke-width="2.3"/><path d="M17.8,17 L29.3,10.5 L29.3,44" fill="none" stroke="#2f63e6" stroke-width="4.4" stroke-linejoin="miter"/></svg>
<svg class="ic" style="left:101.5px;top:1389.2px" width="54" height="54" viewBox="0 0 54 54"><circle cx="27" cy="27" r="25.2" fill="none" stroke="#2f63e6" stroke-width="2.3"/></svg><div class="t" style="left:101.5px;top:1391.2px;width:54px;text-align:center;font-size:51px;color:#2f63e6">3</div>
<svg class="ic" style="left:585.8px;top:1389.2px" width="54" height="54" viewBox="0 0 54 54"><circle cx="27" cy="27" r="25.2" fill="none" stroke="#2f63e6" stroke-width="2.3"/></svg><div class="t" style="left:585.8px;top:1391.2px;width:54px;text-align:center;font-size:51px;color:#2f63e6">2</div>
<div class="abs" style="left:24.5px;top:1566.0px;width:162.0px;height:51.5px;border-radius:11px;background:#373737;border:1.5px solid #575757;box-shadow:0 0.5px 1.5px rgba(0,0,0,.15)"></div>
<div class="abs" style="left:207.5px;top:1566.0px;width:61.5px;height:51.5px;border-radius:11px;background:#373737;border:1.5px solid #575757;box-shadow:0 0.5px 1.5px rgba(0,0,0,.15)"></div>
<div class="abs" style="left:290.0px;top:1566.0px;width:53.5px;height:51.5px;border-radius:11px;background:#373737;border:1.5px solid #575757;box-shadow:0 0.5px 1.5px rgba(0,0,0,.15)"></div>
<div class="abs" style="left:506.5px;top:1566.0px;width:207.0px;height:51.5px;border-radius:11px;background:#373737;border:1.5px solid #575757;box-shadow:0 0.5px 1.5px rgba(0,0,0,.15)"></div>
<svg class="ic" style="left:42.0px;top:1579.0px" width="26" height="26" viewBox="0 0 26 26"><circle cx="13" cy="13" r="13" fill="#3b7bf1"/><path d="M9.8,7.8 L18.3,13 L9.8,18.2 Z" fill="#2b2b2b"/></svg>
<svg class="ic" style="left:90.0px;top:1580.0px" width="24" height="24" viewBox="0 0 24 24"><rect x="1.2" y="1.2" width="21.6" height="21.6" rx="2.5" fill="none" stroke="#ececec" stroke-width="2.2"/><path d="M8,5.5 L8,17.5 L10.5,15.2 L12.5,19 L14.3,18 L12.3,14.3 L15.8,14 Z" fill="#ececec"/></svg>
<svg class="ic" style="left:143.5px;top:1582.0px" width="24" height="20" viewBox="0 0 24 20"><g fill="none" stroke="#ececec" stroke-width="1.8"><rect x="1.0" y="1.0" width="5" height="7" rx="1.2"/><rect x="1.0" y="12.0" width="5" height="7" rx="1.2"/><rect x="9.3" y="1.0" width="5" height="7" rx="1.2"/><rect x="9.3" y="12.0" width="5" height="7" rx="1.2"/><rect x="17.6" y="1.0" width="5" height="7" rx="1.2"/><rect x="17.6" y="12.0" width="5" height="7" rx="1.2"/></g></svg>
<svg class="ic" style="left:225.5px;top:1580.0px" width="25" height="25" viewBox="0 0 25 25"><rect x="1.2" y="1.2" width="22.6" height="10" rx="5" fill="none" stroke="#ececec" stroke-width="2.2"/><circle cx="6.2" cy="6.2" r="2.6" fill="#ececec"/><rect x="0" y="13.5" width="25" height="11.5" rx="5.75" fill="#ececec"/><circle cx="19" cy="19.25" r="3" fill="#333"/></svg>
<svg class="ic" style="left:309.5px;top:1580.5px" width="15" height="24" viewBox="0 0 15 24"><rect x="1.2" y="1.2" width="12.6" height="21.6" rx="2.5" fill="#555" stroke="#ececec" stroke-width="2.1"/><path d="M5.3,4 L9.7,4 M5,19.8 L10,19.8" stroke="#ececec" stroke-width="1.4"/></svg>
<svg class="ic" style="left:523.4px;top:1576.0px" width="28" height="30" viewBox="0 0 28 30"><circle cx="12" cy="13.2" r="9.3" fill="none" stroke="#ececec" stroke-width="2.6"/><path d="M18.8,20 L25,26.3" stroke="#ececec" stroke-width="3" stroke-linecap="round"/><path d="M7.5,13.2 L16.5,13.2" stroke="#ececec" stroke-width="2.2" stroke-linecap="round"/></svg>
<svg class="ic" style="left:571.5px;top:1576.0px" width="28" height="30" viewBox="0 0 28 30"><circle cx="12" cy="13.2" r="9.3" fill="none" stroke="#ececec" stroke-width="2.6"/><path d="M18.8,20 L25,26.3" stroke="#ececec" stroke-width="3" stroke-linecap="round"/><path d="M10,10.3 L12.3,8.8 L12.3,17.5" fill="none" stroke="#ececec" stroke-width="1.9"/></svg>
<svg class="ic" style="left:619.3px;top:1576.0px" width="28" height="30" viewBox="0 0 28 30"><circle cx="12" cy="13.2" r="9.3" fill="none" stroke="#ececec" stroke-width="2.6"/><path d="M18.8,20 L25,26.3" stroke="#ececec" stroke-width="3" stroke-linecap="round"/><rect x="8.3" y="9.5" width="7.4" height="7.4" rx="1" fill="none" stroke="#ececec" stroke-width="2"/></svg>
<svg class="ic" style="left:667.3px;top:1576.0px" width="28" height="30" viewBox="0 0 28 30"><circle cx="12" cy="13.2" r="9.3" fill="none" stroke="#ececec" stroke-width="2.6"/><path d="M18.8,20 L25,26.3" stroke="#ececec" stroke-width="3" stroke-linecap="round"/><path d="M7.8,13.2 L16.2,13.2 M12,9 L12,17.4" stroke="#ececec" stroke-width="2.1"/></svg></div>
<div id="status"><svg class="ic" style="left:22.5px;top:18.0px" width="31" height="19" viewBox="0 0 31 19"><path d="M0,3.5 Q0,0 3.5,0 L23.5,0 Q25.3,0 26.3,1.5 L30.5,9.5 L26.3,17.5 Q25.3,19 23.5,19 L3.5,19 Q0,19 0,15.5 Z" fill="#3a7cf3"/></svg>
<div class="t" style="left:2134.0px;top:15.5px;font-size:22.4px;font-weight:bold;color:#a3a3a3">Line: 10&nbsp; Col: 5</div>
<div class="abs" style="left:2313px;top:15px;width:2px;height:23px;background:#3a3a3a"></div>
<svg class="ic" style="left:2331.5px;top:13.5px" width="27" height="27" viewBox="0 0 27 27"><rect x="1.2" y="1.2" width="24.6" height="24.6" rx="5" fill="none" stroke="#a3a3a3" stroke-width="2.2"/><rect x="4" y="16.5" width="19" height="6" rx="2" fill="#a3a3a3"/></svg></div>
<div class="abs" style="left:0;top:0;width:3024px;height:1888px;border-radius:16px;box-shadow:inset 0 1.6px 0 #6a6a6a;pointer-events:none"></div>
</div>
</body></html>
